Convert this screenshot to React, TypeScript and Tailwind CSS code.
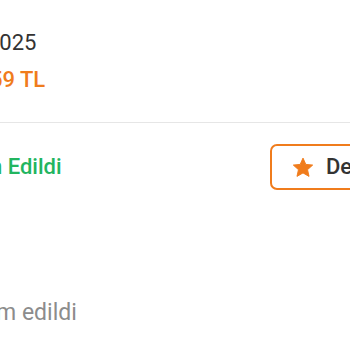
import React from "react";

export default function App() {
  return (
    <div className="w-[350px] h-[350px] overflow-hidden bg-white" style={{ fontFamily: "Roboto, 'Noto Sans', sans-serif" }}>
      <div className="pt-[30px]">
        <div className="whitespace-nowrap -ml-[13px] text-[22px] leading-[26px] text-[#333333]">2025</div>
        <div className="whitespace-nowrap -ml-[10px] mt-[11px] text-[22px] leading-[26px] font-medium text-[#f07c1c]">59 TL</div>
      </div>
      <div className="mt-[29px] h-px bg-[#e6e6e6]" />
      <div className="mt-[21px] flex items-center w-[520px]">
        <div className="w-[270px] shrink-0 overflow-hidden">
          <div className="whitespace-nowrap -ml-[10px] text-[22px] leading-[26px] font-medium text-[#22b55f]">n Edildi</div>
        </div>
        <button className="shrink-0 flex items-center gap-[11px] h-[46px] pl-[19px] pr-[16px] rounded-[7px] border-2 border-[#f07c1c] bg-white">
          <svg width="24" height="23" viewBox="0 0 24 24" fill="#f07c1c" stroke="#f07c1c" strokeWidth="1" strokeLinejoin="round">
            <path d="M12 2.2l2.95 6.55 7.15.72-5.37 4.78 1.55 7.02L12 17.65 5.72 21.27l1.55-7.02L1.9 9.47l7.15-.72z" />
          </svg>
          <span className="text-[22px] leading-[26px] font-medium text-[#333333]">Değerlendir</span>
        </button>
      </div>
      <div className="mt-[110px] whitespace-nowrap -ml-[4px] text-[23px] leading-[26px] text-[#8c8c8c]">m edildi</div>
    </div>
  );
}
